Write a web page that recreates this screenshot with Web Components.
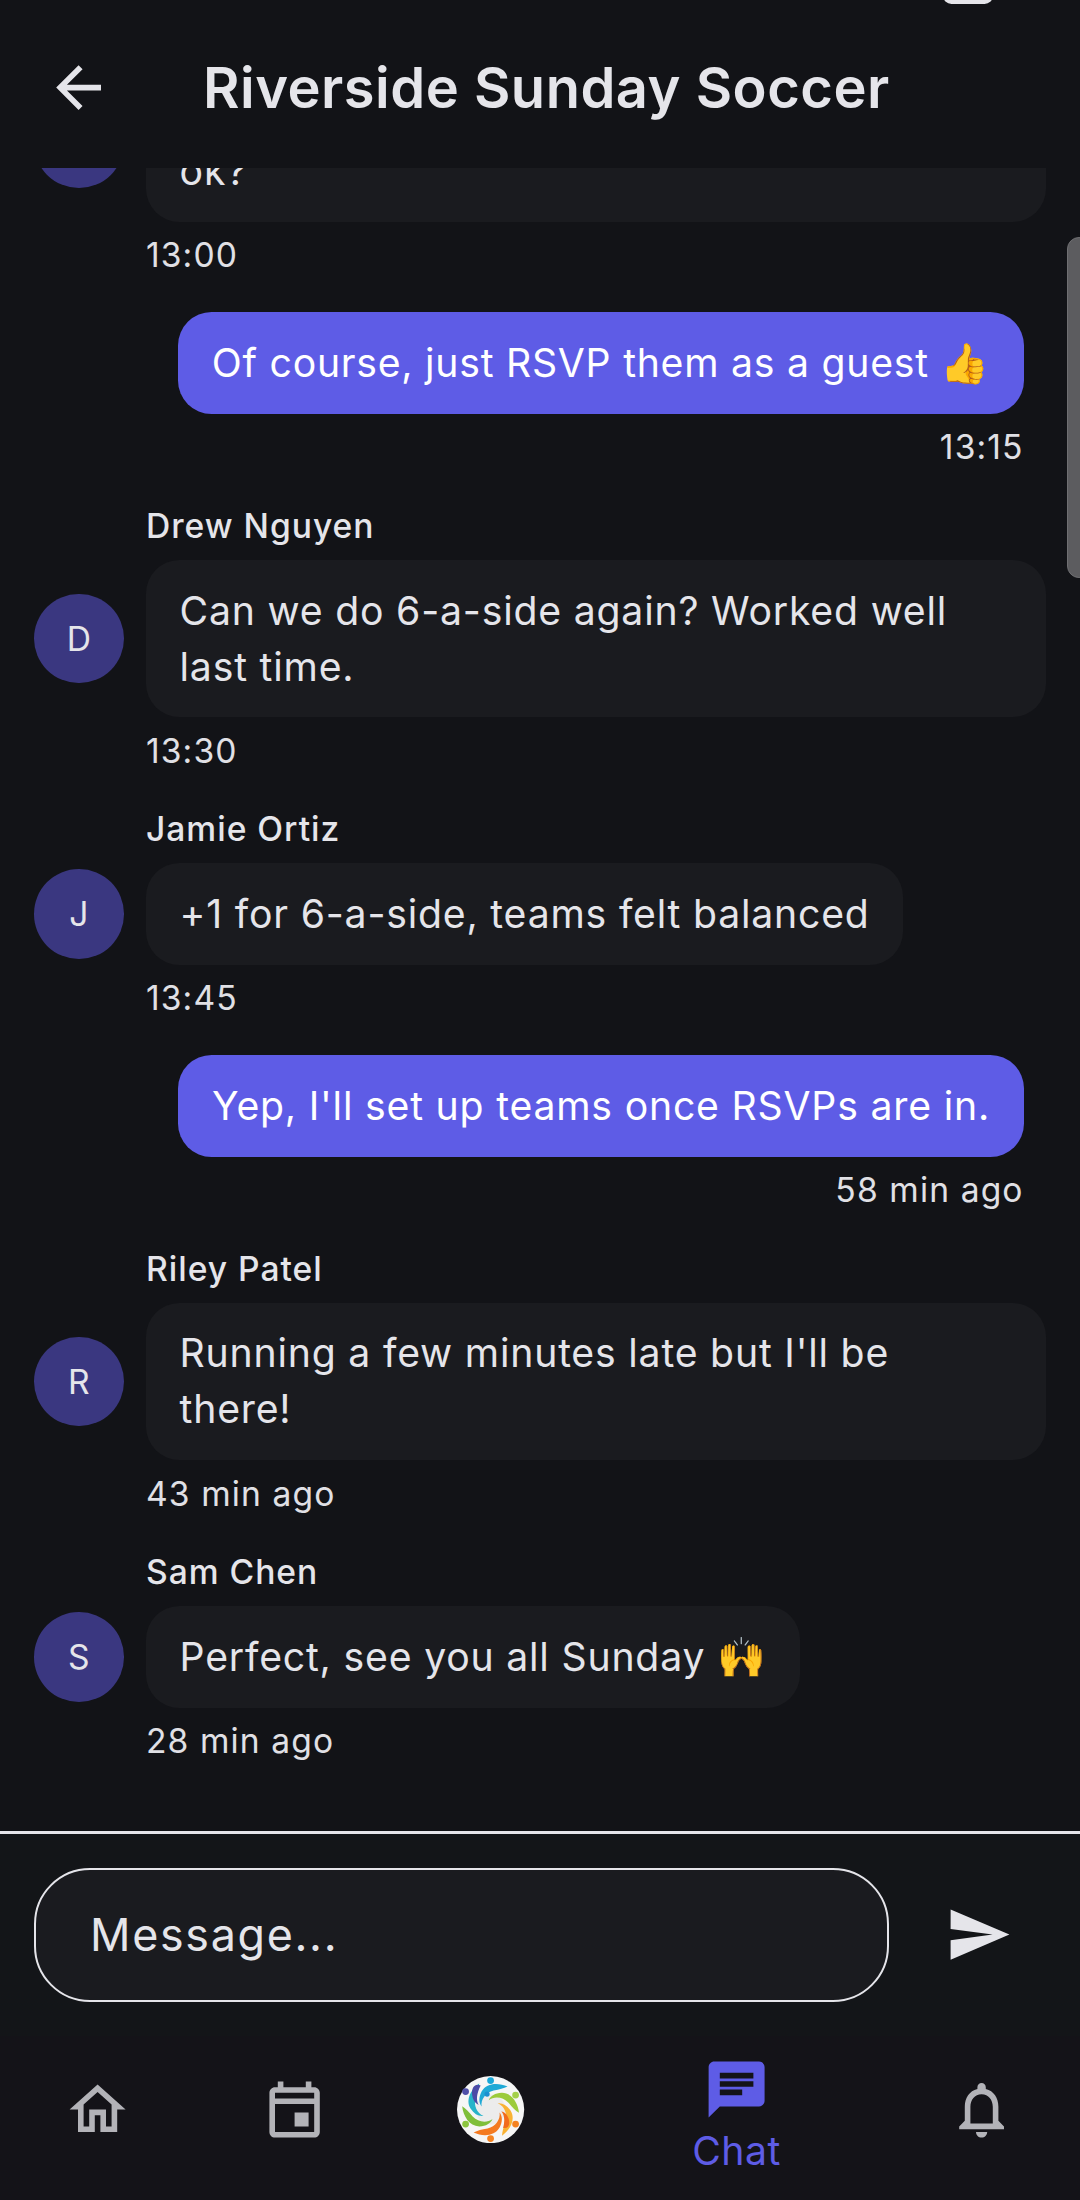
<!DOCTYPE html>
<html lang="en"><head><meta charset="utf-8"><title>Riverside Sunday Soccer</title>
<style>
html,body{margin:0;padding:0;background:#121317}
body{width:1080px;height:2200px;overflow:hidden;font-family:Inter,"Noto Sans",sans-serif;color:#e5e5ea}
</style></head><body>
<chat-app>
  <chat-header slot="header" title="Riverside Sunday Soccer"></chat-header>
  <chat-list slot="list">
    <chat-message initial="" time="13:00" wide>&nbsp;<br>ok?</chat-message>
    <chat-message own time="13:15"><span style="letter-spacing:.74px">Of course, just RSVP them as a guest 👍</span></chat-message>
    <chat-message name="Drew Nguyen" initial="D" time="13:30">Can we do 6-a-side again? Worked well last time.</chat-message>
    <chat-message name="Jamie Ortiz" initial="J" time="13:45">+1 for 6-a-side, teams felt balanced</chat-message>
    <chat-message own time="58 min ago">Yep, I'll set up teams once RSVPs are in.</chat-message>
    <chat-message name="Riley Patel" initial="R" time="43 min ago">Running a few minutes late but I'll be there!</chat-message>
    <chat-message name="Sam Chen" initial="S" time="28 min ago">Perfect, see you all Sunday 🙌</chat-message>
  </chat-list>
  <chat-composer slot="composer"></chat-composer>
  <nav-bar slot="nav">
    <nav-item><svg viewBox="0 0 24 24"><path d="M12 5.69l5 4.5V18h-2v-6H9v6H7v-7.81l5-4.5M12 3L2 12h3v8h6v-6h2v6h6v-8h3L12 3z"/></svg></nav-item>
    <nav-item><svg viewBox="0 0 24 24"><path fill-rule="evenodd" d="M19 4h-1V2h-2v2H8V2H6v2H5c-1.11 0-1.99.9-1.99 2L3 20c0 1.1.89 2 2 2h14c1.1 0 2-.9 2-2V6c0-1.1-.9-2-2-2zm0 16H5V10h14v10zm0-12H5V6h14v2zm-7 5h5v5h-5z"/></svg></nav-item>
    <nav-item><brand-logo></brand-logo></nav-item>
    <nav-item active label="Chat"><svg viewBox="0 0 24 24"><path d="M20 2H4c-1.1 0-1.99.9-1.99 2L2 22l4-4h14c1.1 0 2-.9 2-2V4c0-1.1-.9-2-2-2zM6 9h12v2H6V9zm8 5H6v-2h8v2zm4-6H6V6h12v2z"/></svg></nav-item>
    <nav-item><svg viewBox="0 0 24 24"><path d="M12 22c1.1 0 2-.9 2-2h-4c0 1.1.9 2 2 2zm6-6v-5c0-3.07-1.63-5.64-4.5-6.32V4c0-.83-.67-1.5-1.5-1.5s-1.5.67-1.5 1.5v.68C7.64 5.36 6 7.92 6 11v5l-2 2v1h16v-1l-2-2zm-2 1H8v-6c0-2.48 1.51-4.5 4-4.5s4 2.02 4 4.5v6z"/></svg></nav-item>
  </nav-bar>
</chat-app>
<script>
function def(name, css, html, init){
  customElements.define(name, class extends HTMLElement{
    connectedCallback(){
      if(this.shadowRoot) return;
      const r=this.attachShadow({mode:'open'});
      r.innerHTML='<style>'+css+'</style>'+(typeof html==='function'?html(this):html);
      if(init) init(this,r);
    }
  });
}
def('chat-app',`:host{display:flex;flex-direction:column;width:1080px;height:2200px;position:relative;overflow:hidden}
 ::slotted([slot=list]){flex:1 1 0;min-height:0}`,
 `<slot name="header"></slot><slot name="list"></slot><slot name="composer"></slot><slot name="nav"></slot>`);
def('chat-header',`:host{display:flex;align-items:center;height:168px;flex:none;background:#121317;position:relative;padding-left:45px;padding-top:8px;box-sizing:border-box}
 svg{width:67.2px;height:67.2px;fill:#e5e5ea;flex:none}
 h1{margin:0 0 0 90.8px;font:600 56px/64px Inter,sans-serif;letter-spacing:.5px;color:#e5e5ea;white-space:nowrap}
 .pill{position:absolute;left:943px;top:-13px;width:50px;height:17px;border-radius:10px;background:#e5e5ea}`,
 h=>`<div class="pill"></div><svg viewBox="0 0 24 24"><path d="M20 11H7.83l5.59-5.59L12 4l-8 8 8 8 1.41-1.41L7.83 13H20v-2z"/></svg><h1>${h.getAttribute('title')}</h1>`);
def('chat-list',`:host{display:block;position:relative;overflow:hidden}
 .col{height:100%;box-sizing:border-box;display:flex;flex-direction:column;justify-content:flex-end;gap:33.9px;padding:0 34px 67px}
 .thumb{position:absolute;left:1067px;top:69px;width:24px;height:341px;box-sizing:border-box;background:#5c5c5f;border:1.5px solid #6f6f72;border-radius:12px}`,
 `<div class="col"><slot></slot></div><div class="thumb"></div>`);
def('chat-message',`:host{display:grid;grid-template-columns:89.6px minmax(0,1fr);column-gap:22.4px;flex:none}
 :host([own]){padding-right:22.4px}
 .name{grid-column:2;font:500 33.6px/44.8px Inter,sans-serif;letter-spacing:1px;color:#e5e5ea;margin-bottom:11.2px}
 .av{grid-column:1;grid-row:2;align-self:center;width:89.6px;height:89.6px;border-radius:50%;background:#3a3780;color:#e5e5ea;display:flex;align-items:center;justify-content:center;font:400 33.6px/1 Inter,sans-serif}
 .b{grid-column:2;grid-row:2;justify-self:start;box-sizing:border-box;padding:22.9px 33.6px;border-radius:33.6px;background:#1a1b1f;color:#e5e5ea;font:400 39.2px/56px Inter,"Noto Color Emoji",sans-serif;letter-spacing:.8px}
 :host([wide]) .b{width:100%}
 .t{grid-column:2;grid-row:3;font:400 33.6px/44.8px Inter,sans-serif;letter-spacing:1.12px;color:#e0e0e5;margin-top:11.2px}
 :host([own]) .b{justify-self:end;background:#5e5ce6;color:#fff}
 :host([own]) .t{justify-self:end}`,
 h=>{const own=h.hasAttribute('own'),n=h.getAttribute('name'),i=h.getAttribute('initial');
  return (n?`<div class="name">${n}</div>`:'')+(own?'':`<div class="av">${i||''}</div>`)+`<div class="b"><slot></slot></div><div class="t">${h.getAttribute('time')}</div>`});
def('chat-composer',`:host{display:flex;align-items:flex-start;flex:none;box-sizing:border-box;height:205px;background:#131518;border-top:3px solid #e5e5ea;padding:34px 0 0 34px}
 .f{width:855px;height:134px;box-sizing:border-box;border:2.8px solid #e5e5ea;border-radius:56px;background:#1a1b1f;display:flex;align-items:center;padding-left:54px;font:400 44.8px/67px Inter,sans-serif;letter-spacing:1.7px;color:#e5e5ea}
 svg{width:67.2px;height:67.2px;fill:#e5e5ea;margin:33.4px 0 0 55.5px;flex:none}`,
 `<div class="f">Message...</div><svg viewBox="0 0 24 24"><path d="M2.01 21L23 12 2.01 3 2 10l15 2-15 2z"/></svg>`);
def('nav-bar',`:host{display:grid;grid-template-columns:196px 197px 196px 295px 196px;flex:none;height:164px;background:#141318;box-sizing:border-box;padding-top:20px}`,`<slot></slot>`);
def('nav-item',`:host{display:flex;flex-direction:column;align-items:center;padding-top:20px;color:#b3b3b8;fill:#b3b3b8}
 :host([active]){padding-top:0;color:#5e5ce6;fill:#5e5ce6}
 .w{width:67.2px;height:67.2px;display:flex;align-items:center;justify-content:center}
 ::slotted(svg){width:67.2px;height:67.2px;display:block}
 .l{font:400 39.2px/40px Inter,sans-serif;letter-spacing:.5px;margin-top:8px}`,
 h=>`<div class="w"><slot></slot></div>`+(h.getAttribute('label')?`<div class="l">${h.getAttribute('label')}</div>`:''));
def('brand-logo',`:host{display:block;width:67.2px;height:67.2px}svg{display:block;width:100%;height:100%}`,
 `<svg viewBox="-33.6 -33.6 67.2 67.2"><defs>
 <path id="s" d="M17-23C8-27-4-27-9-18C-12-12-12-7-9-3C-10-10-5-17 3-19C9-20 13-21 17-23Z"/>
 <path id="t" d="M-2-26C-6-30-11-28-13-20C-14-15-13-11-10-8C-11-14-8-20-2-26Z"/></defs>
 <circle r="33.6" fill="#f6f6f6"/><circle r="15" fill="#ececec"/>
 <use href="#s" fill="#1fa9d6"/><use href="#s" fill="#9ccb3b" transform="rotate(60)"/><use href="#s" fill="#f9b233" transform="rotate(120)"/><use href="#s" fill="#f47a20" transform="rotate(180)"/><use href="#s" fill="#7fbf3a" transform="rotate(240)"/><use href="#s" fill="#27b3c9" transform="rotate(300)"/>
 <use href="#t" fill="#4b4aa6" transform="rotate(-18)"/><use href="#t" fill="#f26b1d" transform="rotate(150) scale(.85)"/>
 <circle cy="-29" r="3.4" fill="#19a7d8"/><circle cx="25" cy="-14.5" r="3.4" fill="#a4d04a"/><circle cx="25" cy="14.5" r="3.4" fill="#f58220"/><circle cy="29" r="3.4" fill="#f58220"/><circle cx="-25" cy="14.5" r="3.4" fill="#8cc63f"/><circle cx="-25" cy="-18" r="3.4" fill="#4f4fa8"/><circle cx="-3.5" cy="-15.5" r="2.6" fill="#1a8fd0"/></svg>`);
</script>
</body></html>
